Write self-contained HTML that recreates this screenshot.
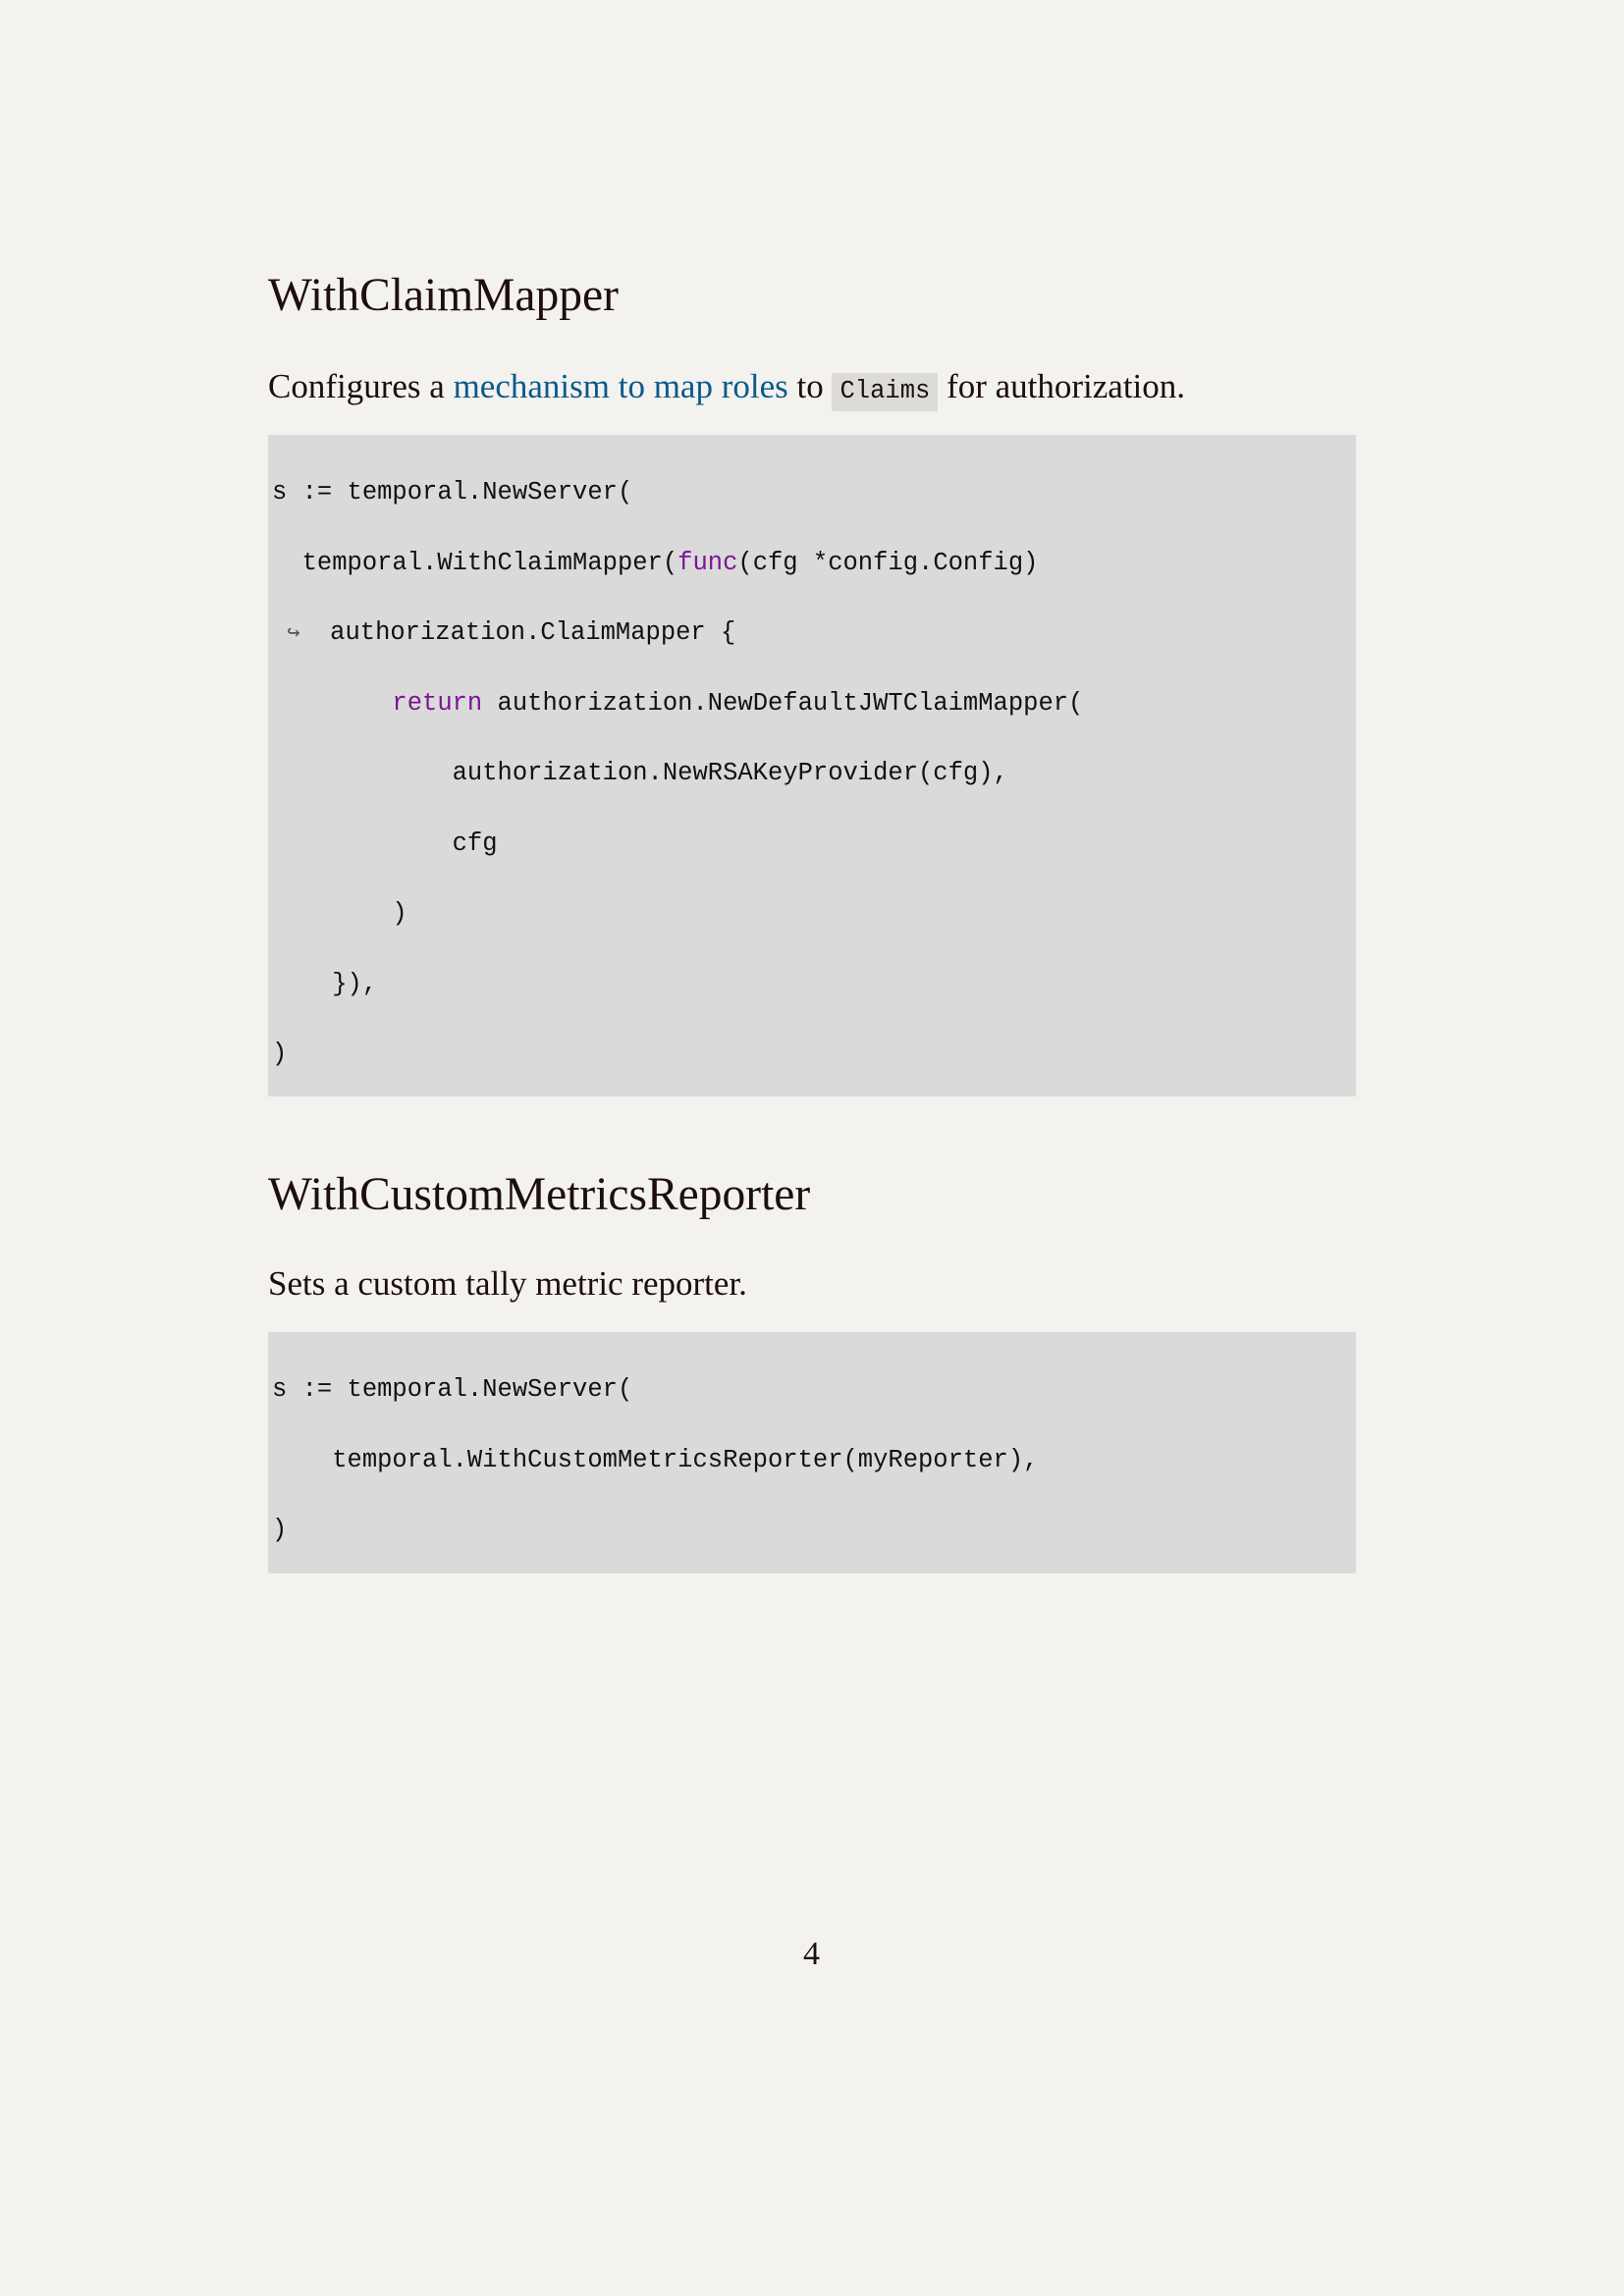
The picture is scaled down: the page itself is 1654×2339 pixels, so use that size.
<!DOCTYPE html>
<html><head><meta charset="utf-8"><style>
html,body{margin:0;padding:0}
body{width:1654px;height:2339px;background:#f3f2ef;position:relative;overflow:hidden;color:#1e0e0e;font-family:"Liberation Serif",serif}
.a{position:absolute;white-space:pre;line-height:1}
h2{margin:0;font-weight:normal;font-size:47.5px}
.p{font-size:35px}
.lk{color:#0b5a8a}
.ic{font-family:"Liberation Mono",monospace;font-size:25.5px;background:#dcdbda;padding:4px 8px 6px}
.cb{position:absolute;left:273px;width:1108px;background:#dadada}
.c{font-family:"Liberation Mono",monospace;font-size:25.5px;color:#111}
.k{color:#7b1595}
.ar{color:#555;font-size:22px}
</style></head><body>
<div class="a" style="left:273px;top:278px"><h2>WithClaimMapper</h2></div>
<div class="a p" style="left:273px;top:376px">Configures a <span class="lk">mechanism to map roles</span> to <span class="ic">Claims</span> for authorization.</div>
<div class="cb" style="top:443px;height:674px"></div>
<div class="a c" style="left:277px;top:489px">s := temporal.NewServer(</div>
<div class="a c" style="left:277px;top:561px">  temporal.WithClaimMapper(<span class="k">func</span>(cfg *config.Config)</div>
<div class="a c" style="left:277px;top:632px"> <span class="ar">↪</span>  authorization.ClaimMapper {</div>
<div class="a c" style="left:277px;top:704px">        <span class="k">return</span> authorization.NewDefaultJWTClaimMapper(</div>
<div class="a c" style="left:277px;top:775px">            authorization.NewRSAKeyProvider(cfg),</div>
<div class="a c" style="left:277px;top:847px">            cfg</div>
<div class="a c" style="left:277px;top:918px">        )</div>
<div class="a c" style="left:277px;top:990px">    }),</div>
<div class="a c" style="left:277px;top:1061px">)</div>

<div class="a" style="left:273px;top:1194px"><h2>WithCustomMetricsReporter</h2></div>
<div class="a p" style="left:273px;top:1290px">Sets a custom tally metric reporter.</div>
<div class="cb" style="top:1357px;height:246px"></div>
<div class="a c" style="left:277px;top:1403px">s := temporal.NewServer(</div>
<div class="a c" style="left:277px;top:1475px">    temporal.WithCustomMetricsReporter(myReporter),</div>
<div class="a c" style="left:277px;top:1546px">)</div>

<div class="a" style="left:818px;top:1974px;font-size:34px">4</div>
</body></html>
